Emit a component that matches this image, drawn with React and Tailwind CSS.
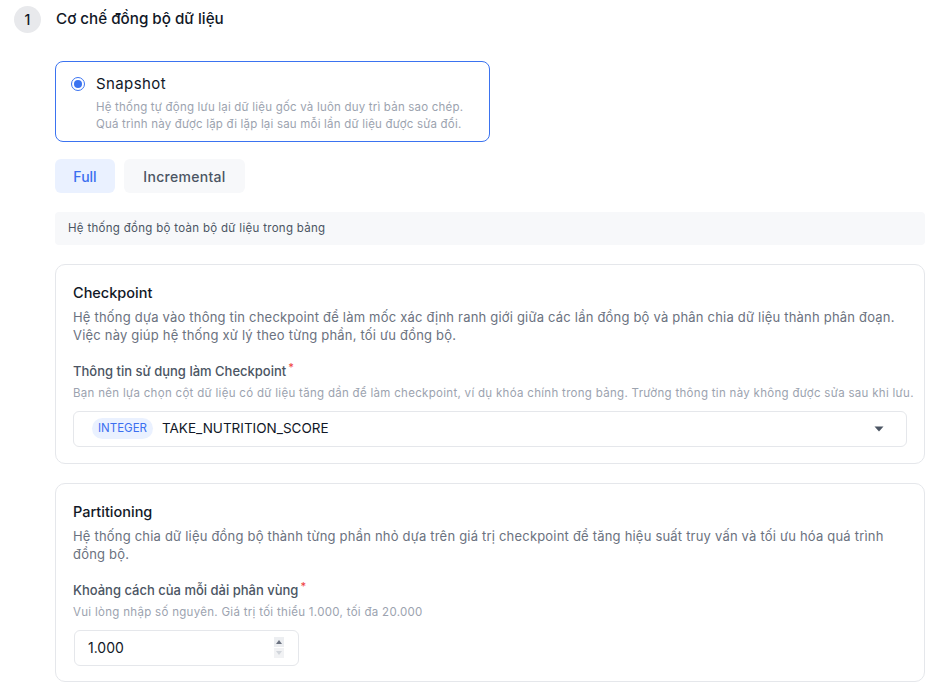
import React from "react";

const font = { fontFamily: "Inter, 'Noto Sans', sans-serif" };

function Caret() {
  return (
    <svg width="10" height="6" viewBox="0 0 10 6">
      <path d="M0.5 0.5 H9.5 L5 5.5 Z" fill="#4b5563" />
    </svg>
  );
}

export default function App() {
  return (
    <div className="w-[952px] h-[699px] bg-white overflow-hidden text-[#111827]" style={font}>
      <div className="flex items-center gap-[15px] pl-[14px] pt-[6px]">
        <div className="w-[27px] h-[27px] rounded-full bg-[#e8e9ec] flex items-center justify-center text-[14px] font-medium text-[#111827]">
          1
        </div>
        <div className="text-[15.2px] font-medium">Cơ chế đồng bộ dữ liệu</div>
      </div>

      <div className="pl-[55px] pr-[27px] pt-[28px]">
        <div className="w-[435px] h-[81px] border border-[#3b73f0] rounded-[8px] pl-[15px] pt-[11px]">
          <div className="flex items-center gap-[11px]">
            <div className="w-[14px] h-[14px] rounded-full border-[1.5px] border-[#3b73f0] flex items-center justify-center">
              <div className="w-[8px] h-[8px] rounded-full bg-[#3b73f0]" />
            </div>
            <div className="text-[15px] text-[#111827] tracking-[0.4px]">Snapshot</div>
          </div>
          <div className="pl-[25px] mt-[3px] text-[11.5px] leading-[17px] text-[#9ca3af] tracking-[0.2px]">
            <div>Hệ thống tự động lưu lại dữ liệu gốc và luôn duy trì bản sao chép.</div>
            <div>Quá trình này được lặp đi lặp lại sau mỗi lần dữ liệu được sửa đổi.</div>
          </div>
        </div>

        <div className="flex gap-[9px] mt-[17px]">
          <div className="w-[60px] h-[34px] rounded-[6px] bg-[#eaf1ff] text-[#3b6ff0] text-[14px] font-medium flex items-center justify-center">
            Full
          </div>
          <div className="w-[121px] h-[34px] rounded-[6px] bg-[#f7f8fa] text-[#4b5563] text-[14px] font-medium tracking-[0.3px] flex items-center justify-center">
            Incremental
          </div>
        </div>

        <div className="mt-[19px] h-[33px] rounded-[4px] bg-[#f7f8fa] flex items-center pl-[13px] text-[11.5px] tracking-[0.3px] text-[#4b5563]">
          Hệ thống đồng bộ toàn bộ dữ liệu trong bảng
        </div>

        <div className="mt-[19px] h-[200px] border border-[#e5e7eb] rounded-[10px] px-[17px] pt-[17px]">
          <div className="text-[14.5px] font-medium text-[#111827]">Checkpoint</div>
          <div className="mt-[4px] text-[13px] leading-[18px] text-[#6b7280] tracking-[0.2px]">
            Hệ thống dựa vào thông tin checkpoint để làm mốc xác định ranh giới giữa các lần đồng bộ và phân chia dữ liệu thành phân đoạn.
            <br />
            Việc này giúp hệ thống xử lý theo từng phần, tối ưu đồng bộ.
          </div>
          <div className="mt-[18px] text-[13px] font-medium text-[#4b5563] flex">
            Thông tin sử dụng làm Checkpoint<span className="text-[#ef4444] text-[11px] ml-[2px] -mt-[3px]">*</span>
          </div>
          <div className="mt-[4px] text-[11.5px] tracking-[0.3px] text-[#9ca3af] whitespace-nowrap">
            Bạn nên lựa chọn cột dữ liệu có dữ liệu tăng dần để làm checkpoint, ví dụ khóa chính trong bảng. Trường thông tin này không được sửa sau khi lưu.
          </div>
          <div className="mt-[8px] h-[36px] border border-[#e5e7eb] rounded-[6px] flex items-center pl-[18px] pr-[22px]">
            <div className="h-[21px] px-[6px] rounded-full bg-[#eaf1ff] text-[#3b6ff0] text-[11.5px] flex items-center">INTEGER</div>
            <div className="ml-[9px] text-[13.5px] text-[#111827]">TAKE_NUTRITION_SCORE</div>
            <div className="ml-auto flex items-center"><Caret /></div>
          </div>
        </div>

        <div className="mt-[19px] h-[199px] border border-[#e5e7eb] rounded-[10px] px-[17px] pt-[17px]">
          <div className="text-[14.5px] font-medium text-[#111827]">Partitioning</div>
          <div className="mt-[4px] text-[13px] leading-[18px] text-[#6b7280] tracking-[0.2px] w-[820px]">
            Hệ thống chia dữ liệu đồng bộ thành từng phần nhỏ dựa trên giá trị checkpoint để tăng hiệu suất truy vấn và tối ưu hóa quá trình
            <br />
            đồng bộ.
          </div>
          <div className="mt-[18px] text-[13px] font-medium text-[#4b5563] flex">
            Khoảng cách của mỗi dải phân vùng<span className="text-[#ef4444] text-[11px] ml-[2px] -mt-[3px]">*</span>
          </div>
          <div className="mt-[4px] text-[11.5px] tracking-[0.3px] text-[#9ca3af]">
            Vui lòng nhập số nguyên. Giá trị tối thiểu 1.000, tối đa 20.000
          </div>
          <div className="mt-[8px] ml-[1px] w-[225px] h-[36px] border border-[#e5e7eb] rounded-[6px] flex items-center pl-[13px] pr-[14px]">
            <div className="text-[14px] text-[#111827]">1.000</div>
            <div className="ml-auto flex flex-col gap-[1px]">
              <div className="w-[10px] h-[10px] bg-[#eceef1] flex items-center justify-center">
                <svg width="6" height="4" viewBox="0 0 6 4"><path d="M0 4 L3 0 L6 4 Z" fill="#6b7280" /></svg>
              </div>
              <div className="w-[10px] h-[10px] bg-[#f1f2f4] flex items-center justify-center">
                <svg width="6" height="4" viewBox="0 0 6 4"><path d="M0 0 L6 0 L3 4 Z" fill="#d1d5db" /></svg>
              </div>
            </div>
          </div>
        </div>
      </div>
    </div>
  );
}
